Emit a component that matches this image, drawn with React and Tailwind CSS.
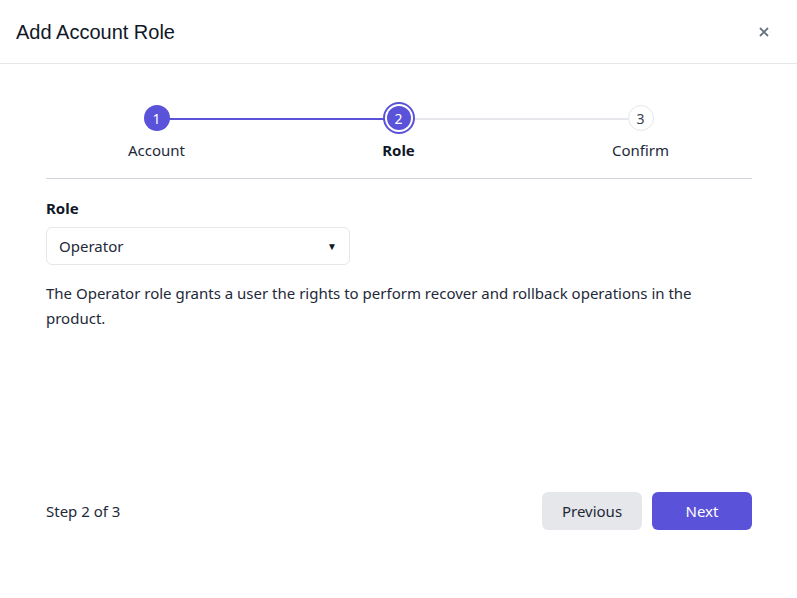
function StepCircle({ n, state }) {
  if (state === 'done') {
    return (
      <div className="grid h-[26px] w-[26px] place-content-center rounded-full bg-[#5a52d9] text-[14px] text-white">
        {n}
      </div>
    )
  }
  if (state === 'current') {
    return (
      <div className="grid h-[32px] w-[32px] place-content-center rounded-full border-2 border-[#5a52d9] bg-white">
        <div className="grid h-[24px] w-[24px] place-content-center rounded-full bg-[#5a52d9] text-[14px] text-white">
          {n}
        </div>
      </div>
    )
  }
  return (
    <div className="grid h-[26px] w-[26px] place-content-center rounded-full border border-gray-200 bg-white text-[14px] text-gray-700">
      {n}
    </div>
  )
}

function Stepper() {
  const steps = [
    { n: 1, label: 'Account', state: 'done' },
    { n: 2, label: 'Role', state: 'current' },
    { n: 3, label: 'Confirm', state: 'todo' },
  ]

  return (
    <div className="relative mx-auto w-[726px] pt-[38px]">
      <div className="absolute left-[121px] top-[54px] h-[2px] w-[242px] bg-[#5a52d9]" />
      <div className="absolute left-[363px] top-[54px] h-[2px] w-[242px] bg-gray-200" />
      <div className="relative grid grid-cols-3">
        {steps.map((s) => (
          <div key={s.n} className="flex flex-col items-center">
            <div className="flex h-[32px] items-center">
              <StepCircle n={s.n} state={s.state} />
            </div>
            <div
              className={
                s.state === 'current'
                  ? 'mt-[5px] text-[15px] font-bold text-gray-900'
                  : 'mt-[5px] text-[15px] text-gray-800'
              }
            >
              {s.label}
            </div>
          </div>
        ))}
      </div>
    </div>
  )
}

export default function App() {
  return (
    <div className="flex h-[598px] w-[797px] flex-col bg-white font-['Noto_Sans',sans-serif] text-gray-900">
      <header className="flex h-[64px] shrink-0 items-center justify-between border-b border-gray-200 pl-[16px] pr-[28px]">
        <h1 className="font-['Liberation_Sans',sans-serif] text-[20px] text-gray-900">Add Account Role</h1>
        <button className="text-gray-500">
          <svg width="10" height="10" viewBox="0 0 10 10" stroke="currentColor" strokeWidth="1.8">
            <path d="M1 1L9 9M9 1L1 9" />
          </svg>
        </button>
      </header>

      <Stepper />

      <div className="ml-[46px] mr-[45px] mt-[16px] border-t border-gray-300" />

      <div className="flex flex-1 flex-col pl-[46px] pr-[45px]">
        <label className="mt-[18px] text-[15px] font-bold">Role</label>
        <div className="mt-[8px] flex h-[38px] w-[304px] items-center justify-between rounded-md border border-gray-200 pl-[12px] pr-[12px] text-[15px] text-gray-800">
          <span>Operator</span>
          <span className="text-[10px] text-gray-900">▼</span>
        </div>
        <p className="mt-[16px] text-[15px] leading-[25px] text-gray-800">
          The Operator role grants a user the rights to perform recover and rollback operations in the
          product.
        </p>

        <div className="mt-auto mb-[68px] flex items-center justify-between">
          <span className="text-[15px] text-gray-800">Step 2 of 3</span>
          <div className="flex gap-[10px]">
            <button className="h-[38px] w-[100px] rounded-md bg-gray-200 text-[15px] text-gray-800">
              Previous
            </button>
            <button className="h-[38px] w-[100px] rounded-md bg-[#5a52d9] text-[15px] text-white">
              Next
            </button>
          </div>
        </div>
      </div>
    </div>
  )
}
